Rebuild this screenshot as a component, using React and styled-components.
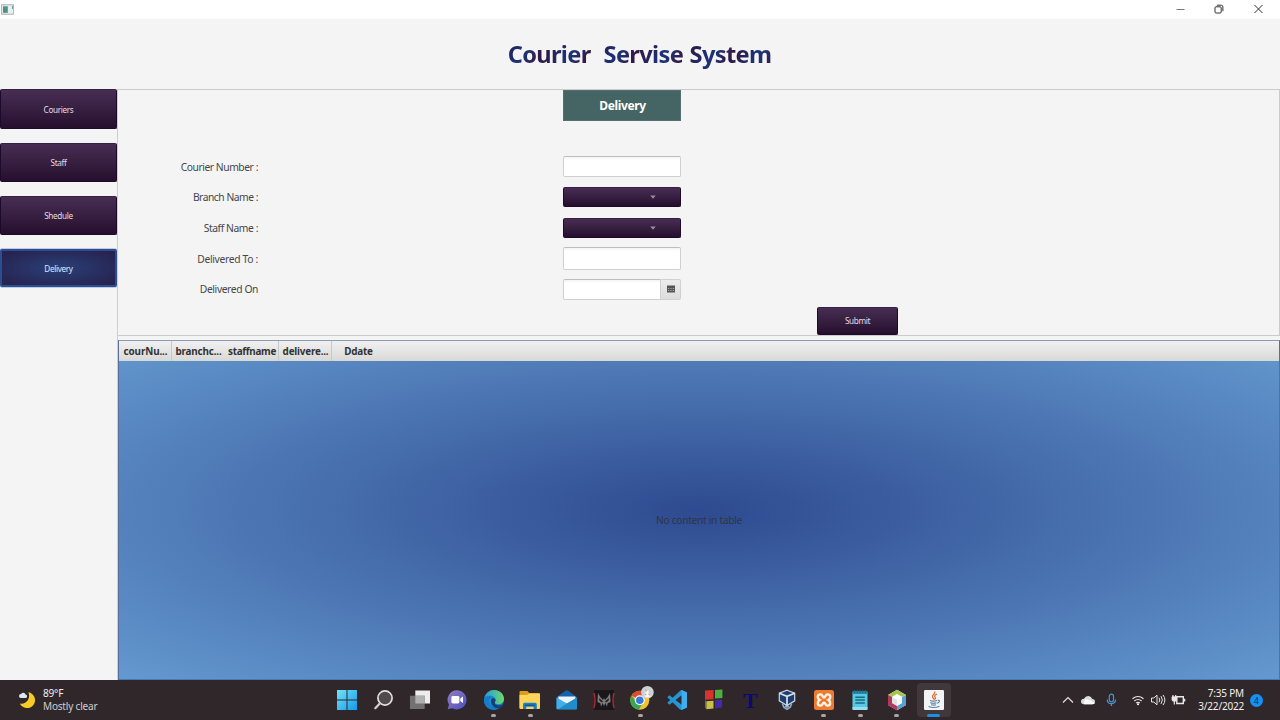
import React from "react";
import styled, { createGlobalStyle, css } from "styled-components";

const Global = createGlobalStyle`
  * { box-sizing: border-box; }
  body { margin: 0; overflow: hidden; background: #f4f4f4; font-family: "Noto Sans", "Open Sans", sans-serif; }
`;

const Window = styled.div`
  width: 1280px;
  height: 720px;
  display: flex;
  flex-direction: column;
  overflow: hidden;
`;

const TitleBar = styled.div`
  height: 19px;
  flex: none;
  display: flex;
  align-items: center;
  justify-content: space-between;
  padding: 0 16px 1px 1px;
  background: #fff;
`;

const WindowControls = styled.div`
  display: flex;
  align-items: center;
  gap: 28px;
  svg { display: block; }
`;

const Header = styled.header`
  height: 70px;
  flex: none;
  display: flex;
  justify-content: center;
  align-items: center;
  padding-right: 1px;
  background: #f4f4f4;
`;

const Title = styled.h1`
  margin: 0;
  font-size: 23.6px;
  line-height: 34px;
  letter-spacing: -0.65px;
  word-spacing: 1px;
  white-space: pre;
  color: transparent;
  background: repeating-linear-gradient(118deg, #2b1d4a 0 3px, #1c3079 17px, #20306f 25px, #351743 38px, #2b1d4a 42px);
  background-clip: text;
  -webkit-background-clip: text;
`;

const Body = styled.div`
  height: 591px;
  flex: none;
  display: flex;
`;

const Sidebar = styled.nav`
  width: 117px;
  flex: none;
  display: flex;
  flex-direction: column;
  gap: 14px;
`;

const purple = css`
  background: linear-gradient(#472d53, #361f40 50%, #260f2d);
  border: 1px solid #1d0929;
  border-top-color: #362145;
  border-radius: 2px;
  color: #e4dce8;
`;

const blue = css`
  background: radial-gradient(ellipse at center, #294079, #272451 85%, #292249);
  border: 2px solid #2b4d91;
  border-radius: 2px;
  box-shadow: 0 0 0 0.5px #8ca4d0;
  color: #e0e6f4;
`;

const Button = styled.button`
  ${(p) => (p.$active ? blue : purple)}
  width: ${(p) => p.$w}px;
  height: ${(p) => p.$h}px;
  flex: none;
  padding: 0;
  display: flex;
  align-items: center;
  justify-content: center;
  font: 8.2px "Noto Sans", sans-serif;
  letter-spacing: -0.35px;
`;

const Main = styled.main`
  flex: 1;
  display: flex;
  flex-direction: column;
  gap: 4px;
  border-left: 1px solid #cdcdd2;
`;

const FormPanel = styled.form`
  height: 247px;
  flex: none;
  border: 1px solid #cbcbce;
  border-left: 0;
`;

const Tag = styled.div`
  width: 118px;
  height: 31px;
  margin: 0 0 30.4px 445px;
  padding-left: 1px;
  display: flex;
  align-items: center;
  justify-content: center;
  background: #456564;
  border: 1px solid #547170;
  color: #fff;
  font-size: 12px;
  font-weight: 700;
  letter-spacing: -0.35px;
`;

const Row = styled.div`
  height: 30.7px;
  display: grid;
  grid-template-columns: 140px 118px;
  column-gap: 305px;
  align-items: center;
`;

const Label = styled.label`
  text-align: right;
  font-size: 10.3px;
  letter-spacing: ${(p) => p.$ls ?? -0.4}px;
  color: #46464a;
  white-space: nowrap;
`;

const Input = styled.input`
  width: ${(p) => p.$w || 118}px;
  height: ${(p) => p.$h || 21}px;
  padding: 0 6px;
  border: 1px solid #cfcfd1;
  border-top-color: #bebec2;
  border-radius: ${(p) => (p.$w ? "2px 0 0 2px" : "2px")};
  background: linear-gradient(#f3f3f3, #fff 3px);
  outline: 0;
`;

const Combo = styled.div`
  ${purple}
  height: 20px;
  display: flex;
  align-items: center;
  justify-content: flex-end;
  padding-right: 24px;
  svg { display: block; }
`;

const DateField = styled.div`
  display: flex;
`;

const DateButton = styled.div`
  width: 20px;
  height: 21px;
  display: flex;
  align-items: center;
  justify-content: center;
  border: 1px solid #d0d0d0;
  border-left: 0;
  border-radius: 0 2px 2px 0;
  background: linear-gradient(#ececec, #dcdcdc);
`;

const SubmitRow = styled.div`
  display: flex;
  padding: 2px 0 0 699px;
`;

const Table = styled.section`
  height: 340px;
  flex: none;
  display: flex;
  flex-direction: column;
  border: 1px solid #5b7099;
  border-top-color: #8f9bb0;
  border-bottom-color: #4c78b2;
  background: radial-gradient(ellipse farthest-corner at center, #2e4a90, #6499cf);
`;

const TableHead = styled.div`
  height: 20px;
  flex: none;
  display: flex;
  background: linear-gradient(#f0f0f0, #e6e6e6 45%, #d8d8d6);
`;

const Column = styled.div`
  width: ${(p) => p.$w}px;
  padding-left: 1px;
  border-right: 1px solid ${(p) => (p.$line ? "#c8c8c9" : "transparent")};
  display: flex;
  align-items: center;
  justify-content: center;
  font-size: 9.9px;
  font-weight: 700;
  letter-spacing: ${(p) => p.$ls}px;
  color: #333;
  white-space: nowrap;
`;

const Empty = styled.div`
  flex: 1;
  display: flex;
  align-items: center;
  justify-content: center;
  font-size: 10.2px;
  letter-spacing: -0.3px;
  color: #2e3542;
`;

const Taskbar = styled.footer`
  height: 40px;
  flex: none;
  display: flex;
  background: #30272a;
  border-top: 1px solid #2a2730;
  color: #f2f0f1;
`;

const Weather = styled.div`
  width: 328.5px;
  display: flex;
  align-items: center;
  gap: 7px;
  padding: 0 0 1px 18px;
  font-size: 10px;
  line-height: 13px;
  letter-spacing: -0.18px;
`;

const Muted = styled.div`
  color: #d2cdcf;
`;

const Apps = styled.div`
  width: 623.5px;
  display: grid;
  grid-template-columns: repeat(17, 1fr);
`;

const AppCell = styled.div`
  height: 38px;
  display: flex;
  flex-direction: column;
  align-items: center;
  justify-content: flex-end;
  svg { display: block; overflow: visible; }
`;

const AppTile = styled.div`
  width: 34px;
  height: 34px;
  margin-bottom: -29px;
  border-radius: 4px;
  background: ${(p) => (p.$active ? "#40383b" : "transparent")};
`;

const AppIcon = styled.div`
  width: 24px;
  height: 24px;
  z-index: 1;
`;

const Indicator = styled.div`
  width: ${(p) => (p.$active ? 13 : 5)}px;
  height: 2.5px;
  margin: 2px 0 2.5px;
  border-radius: 2px;
  background: ${(p) => (p.$active ? "#1c8fe6" : p.$running ? "#aaa4a7" : "transparent")};
`;

const Tray = styled.div`
  width: 328px;
  display: flex;
  align-items: center;
  justify-content: flex-end;
  padding: 0 17px 1px 0;
  svg { display: block; }
`;

const Clock = styled.div`
  width: 55px;
  margin: 0 6px 0 3px;
  text-align: right;
  font-size: 10px;
  line-height: 13px;
  letter-spacing: -0.2px;
  white-space: nowrap;
`;

const Badge = styled.div`
  width: 13px;
  height: 13px;
  border-radius: 50%;
  display: flex;
  align-items: center;
  justify-content: center;
  background: #1590f5;
  color: #122b45;
  font-size: 8.5px;
`;

const icons = {
  windows: (
    <>
      <defs>
        <linearGradient id="win" x2="1" y2="1"><stop stopColor="#72e2fb" /><stop offset="1" stopColor="#1598ea" /></linearGradient>
      </defs>
      <path d="M2 2h9.5v9.5H2zM12.5 2H22v9.5h-9.5zM2 12.5h9.5V22H2zM12.5 12.5H22V22h-9.5z" fill="url(#win)" />
    </>
  ),
  search: (
    <>
      <circle cx="13" cy="10" r="7.1" fill="#514a4d" stroke="#e2dfe0" strokeWidth="1.7" />
      <path d="m8 15.2-4.7 5" stroke="#d4d0d2" strokeWidth="2.2" strokeLinecap="round" />
    </>
  ),
  taskview: (
    <>
      <path d="M7.3 2.5H22v13H7.3z" fill="#eeedee" />
      <path d="M2 7.7h14.7V21H2z" fill="#727071" />
      <path d="M7.3 7.7h9.4v7.8H7.3z" fill="#b1afb0" />
    </>
  ),
  chat: (
    <>
      <defs><linearGradient id="chat" x2="1" y2="1"><stop stopColor="#947fc0" /><stop offset="1" stopColor="#4b4fc1" /></linearGradient></defs>
      <path d="M12 2.2a9.6 9.6 0 1 1-4.7 18L2.7 21.2 4 16.8A9.6 9.6 0 0 1 12 2.2Z" fill="url(#chat)" />
      <rect x="6.4" y="8" width="8" height="7.5" rx="1.4" fill="#fff" />
      <path d="m15.3 10.6 2.7-2v6.5l-2.7-2Z" fill="#fff" />
    </>
  ),
  edge: (
    <>
      <defs>
        <linearGradient id="edgeA" y2="1"><stop stopColor="#2aafe4" /><stop offset="1" stopColor="#0e61b8" /></linearGradient>
        <linearGradient id="edgeB" x2="1"><stop stopColor="#2499de" /><stop offset="1" stopColor="#6bdb6a" /></linearGradient>
      </defs>
      <circle cx="12" cy="12" r="10" fill="url(#edgeA)" />
      <path d="M2.3 10C4 4.8 7.8 2 12 2c5.4 0 10 3.8 10 9 0 3.1-2.5 5.3-5.8 5.3-2.5 0-3.6-1-3.2-2 .8-1.6.8-2.3.5-3.3C12.1 6.6 5.8 6 2.3 10Z" fill="url(#edgeB)" />
      <path d="M9.3 11c-1.2 4.7 1.8 9.2 7.4 9.3 2.1-.8 3.6-2.2 4.4-3.9-3.5 2-8.2 1.2-8.4-1.6 0-1.1 1-1.6.7-3.2-.4-1.6-3.3-2-4.1-.6Z" fill="#173f71" />
      <path d="M3 9.3c2.7-2.2 6.9-1.7 8.2.5-3.3-.6-5.3 3.1-3.2 6.6 1.3 2.4 4 4.3 7 4.8-5.5 2.2-12.3-1.4-12.9-8.1Z" fill="#147dcc" />
    </>
  ),
  folder: (
    <>
      <path d="M1.5 4q0-1 1-1h7l2 2.5H21q1 0 1 1V20H1.5Z" fill="#dc9d18" />
      <path d="M1.5 7h7.8L11.2 5.2H21q1 0 1 1V20q0 1-1 1H2.5q-1 0-1-1Z" fill="#ffd45a" />
      <path d="M5 21v-4.5q0-1.7 1.5-1.7h10.8q1.5 0 1.5 1.7V21h-3.2v-2.3H8.2V21Z" fill="#1780ca" />
      <path d="M7 16.5h9.8V18H7Z" fill="#125b99" />
    </>
  ),
  mail: (
    <>
      <path d="m1.5 9.2 9.4-6.7q1-.6 2 0L22 9.2v11q0 1-1 1H2.5q-1 0-1-1Z" fill="#1263ad" />
      <path d="M3.3 8.5H20.4v7H3.3Z" fill="#edf4f7" />
      <path d="M1.5 9.5 12 15.6 22 9.5v10.8q0 .9-.9.9H2.4q-.9 0-.9-.9Z" fill="#42afe8" />
      <path d="m12 15.6 10-6.1v11q-.2.7-.9.7H3Z" fill="#218ccc" />
    </>
  ),
  game: (
    <>
      <path d="M2 2h20v20H2Z" fill="#191719" />
      <path d="M2 5q2 7 0 15M22 5q-2 7 0 15" stroke="#b12831" strokeWidth="1.4" fill="none" />
      <path d="m6 5 2.2 4 2.8 3 1-2 1 2 2.8-3L18 5l.6 9-3 1.3-.6 3.4L13.4 15 12 18l-1.4-3L9 18.7l-.6-3.4-3-1.3Z" fill="#7d7c7d" />
      <path d="m7 10 4 3.5-1 1-2.5-1.7Zm10 0-4 3.5 1 1 2.5-1.7Z" fill="#1e1c20" />
    </>
  ),
  chrome: (
    <>
      <circle cx="11.8" cy="12.2" r="9.5" fill="#f2c231" />
      <path d="M11.8 12.2 3.6 7.4a9.5 9.5 0 0 1 16.4 0Z" fill="#df4938" />
      <path d="M3.6 7.4a9.5 9.5 0 0 0 7.2 14.3l4.4-7.4-6.9-.2Z" fill="#37a753" />
      <circle cx="11.8" cy="12.2" r="5" fill="#fff" /><circle cx="11.8" cy="12.2" r="3.8" fill="#3979d8" />
      <circle cx="19.4" cy="4.2" r="6.3" fill="#cbd1d5" />
      <path d="m16.3 8.5 1.2-4.2 1-2.8 2 .8.2 2.2 1.9 4-3.2 1Z" fill="#f9f7ee" />
      <path d="m17.8 1.4 1 1.2-.5.8M20.4 6l1.6 1.2M17 7l1.4-.8" stroke="#7a7770" strokeWidth=".8" fill="none" />
    </>
  ),
  code: (
    <>
      <path d="m16.5 2 5.5 2.5v15L16.5 22l-1.8-.8L2.3 9.2l2.1-2L17 17V6.9L4.4 16.8l-2.1-2L15.2 2.7Z" fill="#2596d5" />
      <path d="m16.5 2 5.5 2.5v15L16.5 22Z" fill="#40adee" />
    </>
  ),
  blocks: (
    <>
      <path d="m3 2.5 8.5-.6v9.3l-8.5.5Z" fill="#d8332d" /><path d="m13 2 7.4-.4v8.4l-7.4.5Z" fill="#4daf3c" />
      <path d="m4.3 13.2 7.2-.5V20.5l-7.2.8Z" fill="#c9c047" /><path d="m13 12.3 7-.7v8l-7 .9Z" fill="#432ba8" />
      <path d="m3 12 1.3 1.4v7.9L3 19.6Z" fill="#77752e" />
    </>
  ),
  vbox: (
    <>
      <path d="m12 2.2 7.7 3v7.6L12 17.6l-7.7-4.8V5.2Z" fill="#1f3e70" stroke="#cad8e6" strokeWidth="1.2" />
      <path d="m4.3 5.2 7.7 3.2 7.7-3.2M12 8.4v9" stroke="#d9e3ec" strokeWidth="1.7" fill="none" />
      <path d="m7.3 15.4 1.5 3.8 3.2 2.2 3.2-2.2 1.5-3.8M10 17.8l2 1.3 2-1.3" fill="none" stroke="#8babc9" strokeWidth="1.6" />
    </>
  ),
  xampp: (
    <>
      <rect x="2" y="2" width="20" height="20" rx="2.5" fill="#ee7b31" />
      <path d="M8 6.4c3-.5 2 3.1 4 3.1s1-3.6 4-3.1c3.4.7 2.5 4.4.5 5.5 2.2 1.4 2.4 5.3-.6 5.7-2.9.4-2-2.9-3.9-2.9s-1 3.3-3.9 2.9c-3-.4-2.8-4.3-.6-5.7-2-1.1-2.9-4.8.5-5.5Z" fill="none" stroke="#fff3e7" strokeWidth="2.4" />
    </>
  ),
  notepad: (
    <>
      <rect x="4.5" y="3.5" width="15" height="18.5" rx="1.3" fill="#57c9e4" /><path d="M4.5 19h15v2q0 1-1 1h-13q-1 0-1-1Z" fill="#9cdded" />
      <path d="M4.5 3.5h15V6h-15Z" fill="#258aaa" /><path d="M6.5 1.8v3M9.2 1.8v3M12 1.8v3M14.8 1.8v3M17.5 1.8v3" stroke="#1b6784" />
      <path d="M7.3 9.2h9.5M7.3 12.1h9.5M7.3 15h9.5" stroke="#176982" strokeWidth="1.5" />
    </>
  ),
  netbeans: (
    <>
      <path d="M12 1.7 21 7v10l-9 5.3L3 17V7Z" fill="#e8edf0" />
      <path d="M12 1.7 3 7v4l4.5-2.2L12 6l4.5 2.8L21 7Z" fill="#a4c84c" />
      <path d="M3 7v10l9 5.3v-4.5L7 15V9Z" fill="#b6355f" /><path d="m12 22.3 9-5.3V7l-4 2v6l-5 2.8Z" fill="#57a2cf" />
      <path d="m12 6.3 5 2.8-5 3-5-3Z" fill="#fff" /><path d="m7 9 5 3v6l-5-3Z" fill="#dde2df" /><path d="m12 12 5-3v6l-5 3Z" fill="#f5f8f8" />
    </>
  ),
  java: (
    <>
      <rect x="2" y="2" width="20" height="20" rx="1.2" fill="#f2f4f6" />
      <path d="M12.8 3.5c1.2 2.4-3.5 3.6-2.2 5.6.4.8 1.2 1.3 1.1 2.4M15 6c-2.8 1.4-2.7 2.5-1.8 3.4.8 1-.1 1.7-.9 2.2" fill="none" stroke="#dd733b" strokeWidth="1.3" />
      <path d="M8 12.5q3.5 1.3 7 0M8.3 14.7q3.3 1 6.2 0M9 16.7q2.8.8 5 0M15.6 12.2c3-.3 2 2.7-.5 3M6.5 18.5q5.5 2 11-.3" fill="none" stroke="#5c80a0" strokeWidth="1.1" />
    </>
  ),
};

const LetterIcon = styled.div`
  width: 24px;
  height: 24px;
  text-align: center;
  font: 700 22px/25px "Liberation Serif", serif;
  color: #0d0b6c;
`;

const apps = [
  ["windows"], ["search"], ["taskview"], ["chat"], ["edge", 1], ["folder", 1], ["mail"], ["game"], ["chrome", 1],
  ["code"], ["blocks"], ["letter"], ["vbox"], ["xampp", 1], ["notepad", 1], ["netbeans", 1], ["java", 1, 1],
];

const Arrow = () => (
  <svg width="6" height="4" viewBox="0 0 6 4"><path d="M.3.4h5.4L3 3.7Z" fill="#9b8ea3" /></svg>
);

const CalendarIcon = () => (
  <svg width="8" height="8" viewBox="0 0 8 8">
    <path d="M0 .5h8v7H0Z" fill="#555" />
    <path d="M1 3.5h6M1 5.5h6" stroke="#aaa" strokeDasharray="1.2 1.2" />
  </svg>
);

export default function App() {
  return (
    <Window>
      <Global />
      <TitleBar>
        <svg width="13" height="11" viewBox="0 0 13 11">
          <rect x=".6" y=".8" width="12" height="9.4" fill="#e9f0ee" stroke="#a5b2b4" />
          <path d="M2 2.3h4.8v6.5H2Z" fill="#4d918a" /><path d="M11.5 2v3" stroke="#72a095" />
        </svg>
        <WindowControls>
          <svg width="12" height="10" viewBox="0 0 12 10"><path d="M2.5 5.5h8" stroke="#777" /></svg>
          <svg width="10" height="10" viewBox="0 0 10 10" fill="none" stroke="#333">
            <rect x="1" y="2.8" width="6.2" height="6.2" rx="1" /><path d="M2.8 1.2h4.4q1.7 0 1.7 1.7v4.3" />
          </svg>
          <svg width="12" height="10" viewBox="0 0 12 10"><path d="m2.5 1 8 8M10.5 1l-8 8" stroke="#333" /></svg>
        </WindowControls>
      </TitleBar>
      <Header><Title>{"Courier  Servise System"}</Title></Header>
      <Body>
        <Sidebar>
          <Button $w={117} $h={40}>Couriers</Button>
          <Button $w={117} $h={39}>Staff</Button>
          <Button $w={117} $h={39}>Shedule</Button>
          <Button $w={117} $h={38} $active>Delivery</Button>
        </Sidebar>
        <Main>
          <FormPanel>
            <Tag>Delivery</Tag>
            <Row><Label $ls={-0.44}>Courier Number :</Label><Input /></Row>
            <Row><Label $ls={-0.48}>Branch Name :</Label><Combo><Arrow /></Combo></Row>
            <Row><Label $ls={-0.42}>Staff Name :</Label><Combo><Arrow /></Combo></Row>
            <Row><Label $ls={-0.32}>Delivered To :</Label><Input $h={23} /></Row>
            <Row>
              <Label $ls={-0.4}>Delivered On</Label>
              <DateField><Input $w={98} /><DateButton><CalendarIcon /></DateButton></DateField>
            </Row>
            <SubmitRow><Button type="button" $w={81} $h={28}>Submit</Button></SubmitRow>
          </FormPanel>
          <Table>
            <TableHead>
              <Column $w={53} $line $ls={-0.1}>courNu...</Column>
              <Column $w={53} $ls={-0.15}>branchc...</Column>
              <Column $w={54} $line $ls={-0.3}>staffname</Column>
              <Column $w={53} $line $ls={-0.2}>delivere...</Column>
              <Column $w={53} $ls={-0.2}>Ddate</Column>
            </TableHead>
            <Empty>No content in table</Empty>
          </Table>
        </Main>
      </Body>
      <Taskbar>
        <Weather>
          <svg width="18" height="18" viewBox="0 0 18 18">
            <path d="M10.4 1.2A8 8 0 1 1 1.8 12.5C8 14 13 8 10.4 1.2Z" fill="#f9cc25" />
            <path d="M2.9 7a2 2 0 0 1 .2-4 2.5 2.5 0 0 1 4.5.4A1.8 1.8 0 0 1 7 7Z" fill="#d9e9f3" />
          </svg>
          <div>89°F<Muted>Mostly clear</Muted></div>
        </Weather>
        <Apps>
          {apps.map(([name, running, active]) => (
            <AppCell key={name}>
              <AppTile $active={active} />
              <AppIcon>
                {name === "letter" ? <LetterIcon>T</LetterIcon> : <svg width="24" height="24" viewBox="0 0 24 24" fill="none">{icons[name]}</svg>}
              </AppIcon>
              <Indicator $running={running} $active={active} />
            </AppCell>
          ))}
        </Apps>
        <Tray>
          <svg width="134" height="20" viewBox="0 0 134 20" fill="none" stroke="#e9e6e7">
            <path d="m11 12.5 5-5 5 5" strokeWidth="1.1" />
            <path d="M32 14.2q-3-.3-3-2.8t3-2.7q1.5-3 4.5-2.8 3 .3 3.8 3.2 2.7.2 2.7 2.7 0 2.2-2.6 2.4Z" fill="#ddd" stroke="none" />
            <path d="M33 9q6 1 10 4-1 1.2-2.6 1.2H32Z" fill="#fff" stroke="none" />
            <g stroke="#4295d3" strokeWidth="1.2"><rect x="57.3" y="4.2" width="4.2" height="7.6" rx="2.1" /><path d="M55.3 9.5q0 4.2 4.1 4.2t4.1-4.2M59.4 13.7V16" /></g>
            <path d="M80.5 8.8q5.5-4.6 11 0M82.3 11q3.7-3 7.4 0M84.2 13q1.8-1.4 3.6 0" strokeWidth="1.2" /><circle cx="86" cy="14.2" r="1" fill="#fff" stroke="none" />
            <path d="M99.5 8h2.3l3.2-2.8v9.6l-3.2-2.8h-2.3ZM107 7.7q1.6 2.3 0 4.6M109 6.1q2.8 3.9 0 7.8M111 4.9q3.8 5.1 0 10.2" />
            <path d="M124.8 6.8h6.5v6.7h-6.5ZM132.6 8.8v2.6" strokeWidth="1.4" /><path d="M120 6.8h4.6v3q0 1.5-2.3 1.5T120 9.8Z" fill="#e9e6e7" strokeWidth=".8" /><path d="M122.3 11v3.5M121 5v2M123.7 5v2" strokeWidth="1.2" />
          </svg>
          <Clock>7:35 PM<br />3/22/2022</Clock>
          <Badge>4</Badge>
        </Tray>
      </Taskbar>
    </Window>
  );
}
